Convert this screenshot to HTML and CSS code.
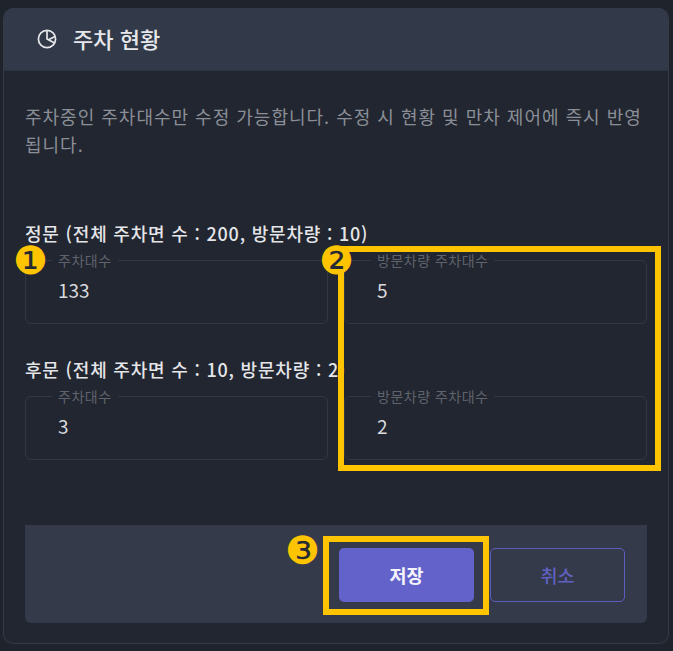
FILE: index.html
```html
<!DOCTYPE html>
<html lang="ko">
  <head>
    <meta charset="UTF-8" />
    <title>주차 현황</title>
    <link rel="stylesheet" href="styles.css">
  </head>
  <body>
    <div class="panel">
      <div class="panel_head">
        <svg class="head_icon" viewBox="0 0 20 20" width="20" height="20">
          <circle cx="10" cy="10" r="8.6"></circle>
          <path d="M10 1.4V10L17.6 14"></path>
          <path d="M11.5 10.8L18 7.4"></path>
        </svg>
        <h1>주차 현황</h1>
      </div>
      <div class="panel_body">
        <p class="desc">주차중인 주차대수만 수정 가능합니다. 수정 시 현황 및 만차 제어에 즉시 반영됩니다.</p>

        <div class="group">
          <h2>정문 (전체 주차면 수 : 200, 방문차량 : 10)</h2>
          <div class="row">
            <fieldset><legend>주차대수</legend><span>133</span></fieldset>
            <fieldset><legend>방문차량 주차대수</legend><span>5</span></fieldset>
          </div>
        </div>

        <div class="group">
          <h2>후문 (전체 주차면 수 : 10, 방문차량 : 2)</h2>
          <div class="row">
            <fieldset><legend>주차대수</legend><span>3</span></fieldset>
            <fieldset><legend>방문차량 주차대수</legend><span>2</span></fieldset>
          </div>
        </div>

        <div class="foot">
          <button class="btn save">저장</button>
          <button class="btn cancel">취소</button>
        </div>
      </div>
    </div>

    <!-- annotations on top of the capture -->
    <div class="mark_box box2"></div>
    <div class="mark_box box3"></div>
    <div class="num num1">❶</div>
    <div class="num num2">❷</div>
    <div class="num num3">❸</div>
  </body>
</html>
```

FILE: styles.css
```css
* {
  margin: 0;
  padding: 0;
  box-sizing: border-box;
}
body {
  width: 673px;
  height: 651px;
  padding: 8px 4px 7px 3px;
  background-color: #1f232c;
  font-family: "Noto Sans CJK KR", "Noto Sans", sans-serif;
  overflow: hidden;
}
.panel {
  height: 636px;
  background-color: #222630;
  border: 1px solid #343a47;
  border-top: none;
  border-radius: 10px;
  overflow: hidden;
}
.panel_head {
  display: flex;
  align-items: center;
  height: 63px;
  padding-left: 33px;
  background-color: #323a49;
  border-bottom: 1px solid #2d3340;
}
.head_icon {
  fill: none;
  stroke: #e6e7ea;
  stroke-width: 1.7;
}
h1 {
  margin: 0 0 2px 16px;
  font-size: 22px;
  font-weight: 500;
  line-height: 28px;
  color: #e6e7ea;
}
.panel_body {
  padding: 31px 21px 0;
}
.desc {
  height: 56px;
  font-size: 18px;
  line-height: 28px;
  letter-spacing: 1px;
  color: #8a8e97;
}
.group {
  margin-top: 63px;
}
.group + .group {
  margin-top: 33px;
}
h2 {
  height: 24px;
  margin-bottom: 5px;
  font-size: 18px;
  font-weight: 500;
  line-height: 24px;
  letter-spacing: 0.8px;
  color: #e4e5e8;
}
.row {
  display: grid;
  grid-template-columns: 303px 303px;
  gap: 16px;
}
fieldset {
  height: 74px;
  padding: 0 32px;
  border: 1px solid #313745;
  border-radius: 6px;
}
legend {
  margin-left: -6px;
  padding: 0 6px;
  font-size: 14px;
  line-height: 20px;
  letter-spacing: 0.5px;
  color: #5f636c;
}
fieldset span {
  display: block;
  margin-top: 6px;
  font-size: 19px;
  line-height: 28px;
  color: #d9dade;
}
.foot {
  display: flex;
  justify-content: flex-end;
  gap: 16px;
  height: 98px;
  margin-top: 65px;
  padding: 23px 22px 0 0;
  background-color: #343a49;
  border-radius: 0 0 6px 6px;
}
.btn {
  width: 135px;
  height: 54px;
  border-radius: 5px;
  font-family: inherit;
  font-size: 18.5px;
  font-weight: 700;
}
.save {
  background-color: #6362ca;
  border: none;
  color: #f4f4fa;
}
.cancel {
  background-color: transparent;
  border: 1px solid #5c5cc0;
  color: #6060c2;
  font-weight: 500;
}

.mark_box {
  position: absolute;
  border: 6px solid #ffc400;
}
.box2 {
  left: 338px;
  top: 246px;
  width: 323px;
  height: 225px;
}
.box3 {
  left: 323px;
  top: 536px;
  width: 166px;
  height: 79px;
}
/* dark disc sits under the glyph so the numeral stays dark over the box */
.num {
  position: absolute;
  display: flex;
  justify-content: center;
  width: 25px;
  height: 25px;
  border-radius: 50%;
  background-color: #262a33;
  color: #ffc400;
  font-family: "DejaVu Sans", sans-serif;
  font-size: 39px;
  line-height: 25px;
}
.num1 {
  left: 18px;
  top: 248px;
}
.num2 {
  left: 324px;
  top: 248px;
}
.num3 {
  left: 290px;
  top: 538px;
}
```
